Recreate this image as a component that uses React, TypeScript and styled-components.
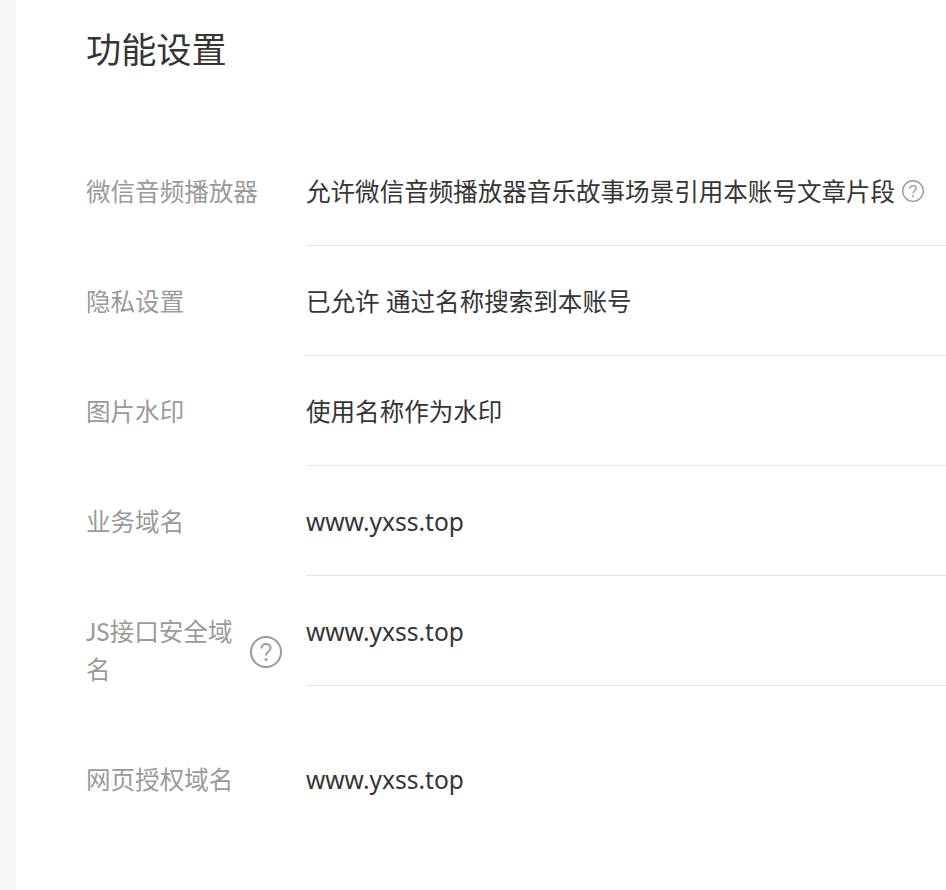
import styled, { createGlobalStyle } from "styled-components";

const GlobalStyle = createGlobalStyle`
  html, body {
    margin: 0;
    padding: 0;
    background: #fff;
    overflow: hidden;
  }
  body {
    font-family: "Noto Sans", "Noto Sans CJK SC", sans-serif;
  }
`;

const Page = styled.div`
  display: flex;
  height: 890px;
  width: 946px;
  overflow: hidden;
`;

const Gutter = styled.div`
  width: 16px;
  flex-shrink: 0;
  background: #f6f7f9;
`;

const Main = styled.div`
  flex: 1;
  padding-left: 70px;
  min-width: 0;
`;

const Title = styled.h2`
  margin: 0;
  height: 136px;
  padding-top: 25px;
  box-sizing: border-box;
  font-size: 35.2px;
  font-weight: 400;
  line-height: 48px;
  color: #353535;
`;

const Row = styled.div`
  display: flex;
  align-items: flex-start;
`;

const Label = styled.div<{ $multi?: boolean }>`
  width: 196px;
  margin-right: 24px;
  flex-shrink: 0;
  display: flex;
  align-items: center;
  padding-top: 36.5px;
  padding-bottom: ${(p) => (p.$multi ? "35px" : "0")};
  font-size: 24.56px;
  line-height: 38.5px;
  color: #9a9a9a;
`;

const LabelText = styled.span<{ $nowrap?: boolean; $latin?: boolean }>`
  flex: 1;
  min-width: 0;
  white-space: ${(p) => (p.$nowrap ? "nowrap" : "normal")};
  font-family: ${(p) => (p.$latin ? `Lato, "Noto Sans CJK SC", sans-serif` : "inherit")};
`;

const Value = styled.div<{ $last?: boolean }>`
  flex: 1;
  height: 110px;
  box-sizing: border-box;
  padding-top: 36.5px;
  border-bottom: ${(p) => (p.$last ? "none" : "1px solid #e7e7eb")};
  display: flex;
  align-items: flex-start;
  font-size: 24.56px;
  line-height: 38.5px;
  color: #353535;
  white-space: nowrap;
`;

const InlineHelp = styled.span`
  display: inline-flex;
  margin-left: 7px;
  margin-top: 7px;
`;

const LabelHelp = styled.span`
  display: inline-flex;
  flex-shrink: 0;
  margin-top: 2px;
`;

const HelpSvg = styled.svg`
  flex-shrink: 0;
  display: block;
`;

const HelpIcon = ({ size }: { size: number }) => (
  <HelpSvg width={size} height={size} viewBox="0 0 32 32" fill="none">
    <circle cx="16" cy="16" r="15" stroke="#9a9a9a" strokeWidth="2" />
    <path
      d="M11.5 12.5c0-2.6 2-4.4 4.6-4.4 2.6 0 4.5 1.7 4.5 4 0 3.4-4.6 3.6-4.6 7.4"
      stroke="#9a9a9a"
      strokeWidth="2"
    />
    <circle cx="16" cy="23.5" r="1.5" fill="#9a9a9a" />
  </HelpSvg>
);

const rows = [
  { label: "隐私设置", value: "已允许 通过名称搜索到本账号" },
  { label: "图片水印", value: "使用名称作为水印" },
  { label: "业务域名", value: "www.yxss.top" },
];

export default function App() {
  return (
    <Page>
      <GlobalStyle />
      <Gutter />
      <Main>
        <Title>功能设置</Title>
        <Row>
          <Label>
            <LabelText $nowrap>微信音频播放器</LabelText>
          </Label>
          <Value>
            允许微信音频播放器音乐故事场景引用本账号文章片段
            <InlineHelp>
              <HelpIcon size={22} />
            </InlineHelp>
          </Value>
        </Row>
        {rows.map((r) => (
          <Row key={r.label}>
            <Label>
              <LabelText>{r.label}</LabelText>
            </Label>
            <Value>{r.value}</Value>
          </Row>
        ))}
        <Row>
          <Label $multi>
            <LabelText $latin>JS接口安全域名</LabelText>
            <LabelHelp>
              <HelpIcon size={32} />
            </LabelHelp>
          </Label>
          <Value>www.yxss.top</Value>
        </Row>
        <Row>
          <Label>
            <LabelText>网页授权域名</LabelText>
          </Label>
          <Value $last>www.yxss.top</Value>
        </Row>
      </Main>
    </Page>
  );
}
